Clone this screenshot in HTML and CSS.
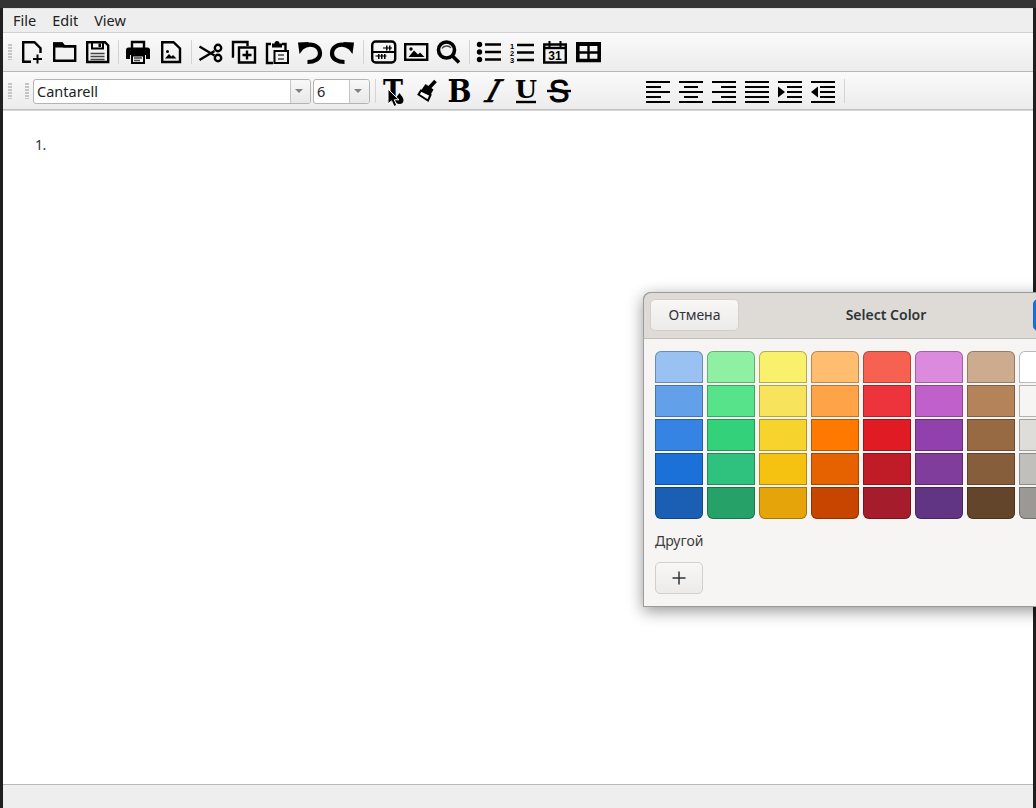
FILE: index.html
```html
<!DOCTYPE html>
<html lang="en">
<head>
<meta charset="utf-8">
<title>Editor</title>
<link rel="stylesheet" href="styles.css">
</head>
<body>
<div class="window">
  <nav class="menubar"><span class="menu-item">File</span><span class="menu-item">Edit</span><span class="menu-item">View</span></nav>

  <div class="toolbar toolbar-main">
    <span class="handle"></span>
    <button class="tool"><svg class="icon" viewBox="0 0 24 24"><path class="ln" d="M12 21.800H4.200V2.200H15.500L21.500 8.200V13"/><path class="ln thin" d="M18.500 14.500v9M14 19h9"/></svg></button>
    <button class="tool"><svg class="icon" viewBox="0 0 24 24"><path class="ln" d="M2.200 20.800V3.500H10L12 6.200H23.200V20.800Z"/><path class="bk" d="M1 2.500H10.500L12.500 5H24V7.500H1Z"/></svg></button>
    <button class="tool"><svg class="icon" viewBox="0 0 24 24"><path class="ln" d="M2.200 2.200H20L23.200 5.400V22H2.200Z"/><path class="ln thin" d="M7 2v6.500H18V2"/><path class="bk" d="M13.500 3.500h2.500v3.500h-2.500z"/><path class="ln grey" d="M5.500 13.500h14M5.500 16.500h14M5.500 19.500h14"/></svg></button>
    <span class="sep"></span>
    <button class="tool"><svg class="icon" viewBox="0 0 24 24"><path class="ln" d="M7 9V2h12v7"/><path class="bk" d="M3.500 7.500h19a2.500 2.500 0 0 1 2.500 2.500v9h-4v-4H5v4H1v-9a2.500 2.500 0 0 1 2.500-2.500z"/><path class="ln thin" d="M7 15.500h12V23H7Z"/><path class="ln grey" d="M9 18h8M9 20.500h6"/></svg></button>
    <button class="tool"><svg class="icon" viewBox="0 0 24 24"><path class="ln" d="M4.200 22V2.200H15.500L22 8.500V22Z"/><path class="bk" d="M7 18.500L11 14l2.500 2.500 1.500-1.500 3.500 3.500Z"/><circle class="bk" cx="9.500" cy="11.500" r="1.500"/></svg></button>
    <span class="sep"></span>
    <button class="tool"><svg class="icon" viewBox="0 0 24 24"><path class="ln" d="M1.500 6.500L16.500 15.500M1.500 20L16.500 11"/><circle class="ln" cx="20" cy="8" r="3.200"/><circle class="ln" cx="20" cy="18" r="3.200"/></svg></button>
    <button class="tool"><svg class="icon" viewBox="0 0 24 24"><path class="ln" d="M3 16.500H2V2H16.500V6"/><path class="ln" d="M8 7.500H24V22.500H8Z"/><path class="ln" d="M16 10.500v9M11.500 15h9"/></svg></button>
    <button class="tool"><svg class="icon" viewBox="0 0 24 24"><path class="ln" d="M9 23H3V4H7M18 4H21.500V10"/><path class="bk" d="M8 3.500h2.500a2.500 2.500 0 0 1 5 0H18V7.500H8Z"/><path class="ln thin" d="M10.500 11H24V23H10.500Z"/><path class="ln grey" d="M14 15h6M14 19h6"/></svg></button>
    <button class="tool"><svg class="icon" viewBox="0 0 24 24"><path class="ln arrow" d="M5 7.500C13 1.500 23 5.500 23 13.500C23 19 17.500 22 10.500 22"/><path class="bk" d="M1 2.500L12 2L2.500 14Z"/></svg></button>
    <button class="tool"><svg class="icon" viewBox="0 0 24 24"><path class="ln arrow" d="M20 7.500C12 1.500 2 5.500 2 13.500C2 19 7.500 22 14.500 22"/><path class="bk" d="M24 2.500L13 2L22.500 14Z"/></svg></button>
    <span class="sep"></span>
    <button class="tool"><svg class="icon" viewBox="0 0 24 24"><rect class="ln" x="2.200" y="1.500" width="23" height="21" rx="3.500"/><path class="ln thin" d="M2 12h23"/><path class="ln grey" d="M13 8h9M5.500 16h11"/><path class="bk" d="M16 5.500h1.500v5H16zM19 5.500h1.500v5H19zM8 14h1.500v5H8zM11 14h1.500v5H11zM14 14h1.500v5H14z"/></svg></button>
    <button class="tool"><svg class="icon" viewBox="0 0 24 24"><rect class="ln" x="2.200" y="4.200" width="22" height="15.600"/><path class="bk" d="M5.500 17L11 10.500L15 14.500L17 12.500L21.500 17Z"/><circle class="bk" cx="8" cy="9" r="1.700"/></svg></button>
    <button class="tool"><svg class="icon" viewBox="0 0 24 24"><circle class="ln heavy" cx="10.500" cy="10" r="8"/><path class="ln heavy" d="M16.500 16L23 22.500"/><path class="ln grey" d="M6 8.500C7.500 5.500 13 5 15 8"/></svg></button>
    <span class="sep"></span>
    <button class="tool"><svg class="icon" viewBox="0 0 24 24"><circle class="bk" cx="3.500" cy="4.500" r="2.700"/><circle class="bk" cx="3.500" cy="12" r="2.700"/><circle class="bk" cx="3.500" cy="19.500" r="2.700"/><path class="ln" d="M9 4.500H25M9 12H25M9 19.500H25"/></svg></button>
    <button class="tool"><svg class="icon" viewBox="0 0 24 24"><text class="icon-num" x="1" y="8.500">1</text><text class="icon-num" x="1" y="15.500">2</text><text class="icon-num" x="1" y="22.500">3</text><path class="ln" d="M8 5H25M8 12.500H25M8 20H25"/></svg></button>
    <button class="tool"><svg class="icon" viewBox="0 0 24 24"><path class="ln" d="M2.200 4.500H23.800V22.500H2.200Z"/><path class="ln" d="M2 8H24"/><path class="ln thin" d="M7.500 1v6M18.500 1v6"/><text class="icon-date" x="13" y="19.500">31</text></svg></button>
    <button class="tool"><svg class="icon" viewBox="0 0 24 24"><path class="ln heavy" d="M2.800 3.800H24.200V20.500H2.800Z"/><path class="ln" d="M2 12.500H25M13.500 4V21"/><path class="bk" d="M2 2H25V6H2Z"/></svg></button>
  </div>

  <div class="toolbar toolbar-format">
    <span class="handle"></span>
    <span class="handle handle-second"></span>
    <div class="combo combo-font"><span class="combo-value">Cantarell</span><span class="combo-arrow"></span></div>
    <div class="combo combo-size"><span class="combo-value">6</span><span class="combo-arrow"></span></div>
    <span class="sep"></span>
    <button class="tool"><svg class="icon icon-tall" viewBox="0 0 24 28"><text class="icon-glyph" x="11" y="25" textLength="20" lengthAdjust="spacingAndGlyphs">T</text><path class="bk" d="M17.500 16c1.500 2.500 4 4.500 4 7a4 4 0 0 1-8 0c0-2.500 2.500-4.500 4-7z"/></svg></button>
    <button class="tool"><svg class="icon icon-tall" viewBox="0 0 24 28"><path class="ln heavy" d="M14 11L20.500 4"/><path class="bk" d="M10.500 7L18.500 12.500L15.500 18L6 13.500Z"/><path class="brush-tip" d="M6 13.500L3.500 17.500L13 23.500L15.500 18Z"/></svg></button>
    <button class="tool"><svg class="icon icon-tall" viewBox="0 0 24 28"><text class="icon-glyph" x="11.500" y="25" textLength="24" lengthAdjust="spacingAndGlyphs">B</text></svg></button>
    <button class="tool"><svg class="icon icon-tall" viewBox="0 0 24 28"><text class="icon-glyph icon-italic" transform="translate(9 25) skewX(-18)">I</text></svg></button>
    <button class="tool"><svg class="icon icon-tall" viewBox="0 0 24 28"><text class="icon-glyph icon-under" x="12" y="20.500" textLength="22" lengthAdjust="spacingAndGlyphs">U</text><path class="ln" d="M2 25H22"/></svg></button>
    <button class="tool"><svg class="icon icon-tall" viewBox="0 0 24 28"><text class="icon-strike" x="12" y="25">S</text><path class="ln" d="M0 14H24"/></svg></button>
    <span class="spacer"></span>
    <button class="tool"><svg class="icon" viewBox="0 0 24 24"><path class="ln thin" d="M0 3H24M0 8H15M0 13H24M0 18H15M0 23H24"/></svg></button>
    <button class="tool"><svg class="icon" viewBox="0 0 24 24"><path class="ln thin" d="M0 3H24M5 8H19M0 13H24M5 18H19M0 23H24"/></svg></button>
    <button class="tool"><svg class="icon" viewBox="0 0 24 24"><path class="ln thin" d="M0 3H24M9 8H24M0 13H24M9 18H24M0 23H24"/></svg></button>
    <button class="tool"><svg class="icon" viewBox="0 0 24 24"><path class="ln thin" d="M0 3H24M0 8H24M0 13H24M0 18H24M0 23H24"/></svg></button>
    <button class="tool"><svg class="icon" viewBox="0 0 24 24"><path class="ln thin" d="M0 3H24M9 8H24M9 13H24M9 18H24M0 23H24"/><path class="bk" d="M0 7.500L7 13L0 18.500Z"/></svg></button>
    <button class="tool"><svg class="icon" viewBox="0 0 24 24"><path class="ln thin" d="M0 3H24M9 8H24M9 13H24M9 18H24M0 23H24"/><path class="bk" d="M7 7.500L0 13L7 18.500Z"/></svg></button>
    <span class="sep"></span>
  </div>

  <main class="editor"><p class="list-line">1.</p></main>
  <footer class="statusbar"></footer>
</div>

<svg class="cursor" viewBox="0 0 14 20"><path d="M1 1V16L4.500 12.800L7 18.500L9.800 17.300L7.300 11.800H12Z"/></svg>

<section class="dialog">
  <header class="dialog-head">
    <button class="btn btn-cancel">Отмена</button>
    <h1 class="dialog-title">Select Color</h1>
    <button class="btn btn-select"></button>
  </header>
  <div class="dialog-body">
    <div class="palette">
      <span class="sw top blue1"></span><span class="sw top green1"></span><span class="sw top yellow1"></span><span class="sw top orange1"></span><span class="sw top red1"></span><span class="sw top purple1"></span><span class="sw top brown1"></span><span class="sw top light1"></span><span class="sw top dark1"></span>
      <span class="sw blue2"></span><span class="sw green2"></span><span class="sw yellow2"></span><span class="sw orange2"></span><span class="sw red2"></span><span class="sw purple2"></span><span class="sw brown2"></span><span class="sw light2"></span><span class="sw dark2"></span>
      <span class="sw blue3"></span><span class="sw green3"></span><span class="sw yellow3"></span><span class="sw orange3"></span><span class="sw red3"></span><span class="sw purple3"></span><span class="sw brown3"></span><span class="sw light3"></span><span class="sw dark3"></span>
      <span class="sw blue4"></span><span class="sw green4"></span><span class="sw yellow4"></span><span class="sw orange4"></span><span class="sw red4"></span><span class="sw purple4"></span><span class="sw brown4"></span><span class="sw light4"></span><span class="sw dark4"></span>
      <span class="sw bottom blue5"></span><span class="sw bottom green5"></span><span class="sw bottom yellow5"></span><span class="sw bottom orange5"></span><span class="sw bottom red5"></span><span class="sw bottom purple5"></span><span class="sw bottom brown5"></span><span class="sw bottom light5"></span><span class="sw bottom dark5"></span>
    </div>
    <div class="custom-label">Другой</div>
    <button class="btn btn-add"><svg class="plus" viewBox="0 0 16 16"><path d="M8 1.500v13M1.500 8h13"/></svg></button>
  </div>
</section>
</body>
</html>
```

FILE: styles.css
```css
* { box-sizing: border-box; }
html, body { margin: 0; height: 100%; }
body {
  position: relative;
  width: 1036px;
  height: 808px;
  overflow: hidden;
  background: #1f1f1f;
  border-top: 8px solid #333333;
  font-family: "Noto Sans", "Open Sans", sans-serif;
  font-size: 14px;
  color: #2e3436;
}
.window {
  display: flex;
  flex-direction: column;
  width: 1030px;
  height: 800px;
  margin-left: 3px;
  background: #eeeeee;
}
.menubar {
  display: flex;
  align-items: center;
  height: 25px;
  flex: none;
  padding: 0 0 2px 10px;
  gap: 16px;
  background: #eeeeee;
  border-top: 1px solid #e0e0e0;
  border-bottom: 1px solid #d0d0d0;
  color: #222;
  font-size: 14.5px;
}
.menu-item { display: block; }
.toolbar {
  display: flex;
  align-items: center;
  flex: none;
  padding-left: 5px;
  background: linear-gradient(#fafafa, #ececec);
}
.toolbar-main { height: 39px; border-bottom: 1px solid #b8b8b8; }
.toolbar-format { height: 38px; border-bottom: 1px solid #c0c0c0; }
.handle {
  flex: none;
  width: 4px;
  height: 16px;
  margin-right: 2px;
  background-image: radial-gradient(circle at 1px 1px, #c4c4c4 0.7px, transparent 1px);
  background-size: 2px 3px;
}
.handle-second { margin-left: 11px; margin-right: 4px; }
.tool {
  flex: none;
  display: block;
  width: 33px;
  height: 30px;
  margin: 0;
  padding: 3px 4px 3px 5px;
  border: 0;
  background: none;
}
.icon { display: block; width: 24px; height: 24px; overflow: visible; }
.icon-tall { height: 28px; margin-top: -2px; }
.sep {
  flex: none;
  width: 7px;
  height: 24px;
  background: linear-gradient(#d4d4d4, #d4d4d4) no-repeat 5px 0 / 1px 100%;
}
.spacer { flex: none; width: 66px; }
.ln { fill: none; stroke: #000; stroke-width: 2.4; }
.thin { stroke-width: 2; }
.heavy { stroke-width: 3.6; }
.arrow { stroke-width: 4.2; }
.grey { stroke: #444; stroke-width: 1.3; }
.bk { fill: #000; }
.brush-tip { fill: #fff; stroke: #000; stroke-width: 2; }
.icon-num { font: 700 7.5px "Liberation Sans", sans-serif; fill: #000; }
.icon-date { font: 700 12px "Liberation Sans", sans-serif; fill: #000; text-anchor: middle; }
.icon-glyph { font: 700 31px "DejaVu Serif", serif; fill: #000; text-anchor: middle; }
.icon-italic { font-style: italic; font-weight: 400; stroke: #000; stroke-width: 0.6; }
.icon-under { font-size: 24px; }
.icon-strike { font: 400 31px "Liberation Sans", sans-serif; fill: #000; stroke: #000; stroke-width: 0.9; text-anchor: middle; }
.combo {
  flex: none;
  display: flex;
  align-items: center;
  height: 25px;
  margin-top: 1px;
  background: #fff;
  border: 1px solid #b4b4b4;
  border-radius: 3px;
  overflow: hidden;
  font-size: 14.5px;
  color: #222;
}
.combo-font { width: 278px; margin-right: 2px; }
.combo-size { width: 57px; }
.combo-value { flex: 1; padding-left: 3px; }
.combo-arrow {
  position: relative;
  flex: none;
  width: 20px;
  height: 100%;
  background: linear-gradient(#f8f8f8, #e8e8e8);
  border-left: 1px solid #c4c4c4;
}
.combo-arrow::after {
  content: "";
  position: absolute;
  left: 4px;
  top: 9px;
  border-style: solid;
  border-width: 4px 4.5px 0;
  border-color: #808080 transparent transparent;
}
.editor {
  flex: 1;
  background: #fff;
  border-top: 1px solid #d8d8d8;
  padding: 24px 0 0 32px;
}
.list-line { margin: 0; font-size: 14px; line-height: 19px; letter-spacing: -0.6px; color: #333; }
.statusbar {
  flex: none;
  height: 24px;
  background: #eeeeee;
  border-top: 1px solid #b9b9b9;
}
.cursor {
  position: absolute;
  left: 387px;
  top: 80px;
  width: 14px;
  height: 20px;
}
.cursor path { fill: #000; stroke: #fff; stroke-width: 1; }
.dialog {
  position: absolute;
  left: 643px;
  top: 284px;
  width: 486px;
  height: 315px;
  background: #f6f5f4;
  border-radius: 8px 8px 0 0;
  box-shadow: 0 0 0 1px #9b9b9b inset, 0 4px 16px rgba(0, 0, 0, 0.42);
}
.dialog-head {
  display: flex;
  align-items: center;
  justify-content: space-between;
  height: 47px;
  padding: 0 7px 2px;
  background: #dedbd7;
  border: 1px solid #9b9b9b;
  border-bottom-color: #c0bdb8;
  border-radius: 8px 8px 0 0;
}
.dialog-title { margin: 0; font-size: 14px; font-weight: 600; color: #2e3436; }
.btn {
  display: block;
  font: inherit;
  color: #2e3436;
  background: linear-gradient(#f8f7f6, #edebe9);
  border: 1px solid #d4cfca;
  border-radius: 5px;
}
.btn-cancel { width: 89px; height: 32px; padding: 0; margin-left: -1px; }
.btn-select { width: 88px; height: 32px; padding: 0; background: #1c71d8; border-color: #1b6acb; color: #fff; }
.dialog-body { padding: 12px; }
.palette {
  display: grid;
  grid-template-columns: repeat(9, 48px);
  grid-auto-rows: 32px;
  column-gap: 4px;
  row-gap: 2px;
}
.sw { display: block; box-shadow: inset 0 0 0 1px rgba(0, 0, 0, 0.28); }
.top { border-radius: 6px 6px 0 0; }
.bottom { border-radius: 0 0 6px 6px; }
.custom-label { height: 19px; margin: 12px 0; line-height: 19px; font-size: 14px; color: #3d3d3d; }
.btn-add { display: flex; align-items: center; justify-content: center; width: 48px; height: 32px; padding: 0; }
.plus { display: block; width: 16px; height: 16px; }
.plus path { fill: none; stroke: #2e3436; stroke-width: 1.5; }
.blue1 { background: #99c1f1; } .blue2 { background: #62a0ea; } .blue3 { background: #3584e4; } .blue4 { background: #1c71d8; } .blue5 { background: #1a5fb4; }
.green1 { background: #8ff0a4; } .green2 { background: #57e389; } .green3 { background: #33d17a; } .green4 { background: #2ec27e; } .green5 { background: #26a269; }
.yellow1 { background: #f9f06b; } .yellow2 { background: #f8e45c; } .yellow3 { background: #f6d32d; } .yellow4 { background: #f5c211; } .yellow5 { background: #e5a50a; }
.orange1 { background: #ffbe6f; } .orange2 { background: #ffa348; } .orange3 { background: #ff7800; } .orange4 { background: #e66100; } .orange5 { background: #c64600; }
.red1 { background: #f66151; } .red2 { background: #ed333b; } .red3 { background: #e01b24; } .red4 { background: #c01c28; } .red5 { background: #a51d2d; }
.purple1 { background: #dc8add; } .purple2 { background: #c061cb; } .purple3 { background: #9141ac; } .purple4 { background: #813d9c; } .purple5 { background: #613583; }
.brown1 { background: #cdab8f; } .brown2 { background: #b5835a; } .brown3 { background: #986a44; } .brown4 { background: #865e3c; } .brown5 { background: #63452c; }
.light1 { background: #ffffff; } .light2 { background: #f6f5f4; } .light3 { background: #deddda; } .light4 { background: #c0bfbc; } .light5 { background: #9a9996; }
.dark1 { background: #77767b; } .dark2 { background: #5e5c64; } .dark3 { background: #3d3846; } .dark4 { background: #241f31; } .dark5 { background: #000000; }
```
